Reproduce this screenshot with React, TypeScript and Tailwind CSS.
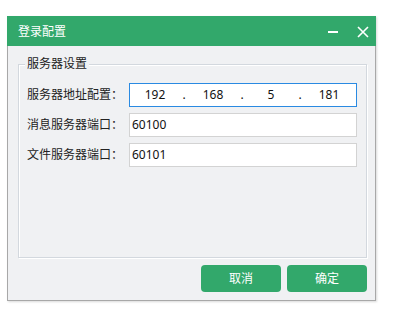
import React from "react";

const font = "font-['Noto_Sans','Noto_Sans_CJK_SC',sans-serif]";

const Field = ({ label, value }: { label: string; value: string }) => (
  <div className="flex h-[24px] items-center">
    <span className="w-[102px] shrink-0 text-[12px] text-[#222]">{label}</span>
    <div className="flex h-[24px] w-[228px] items-center border border-[#d3d3d3] bg-white pl-[2px] text-[12px] text-[#111]">
      {value}
    </div>
  </div>
);

const App = () => {
  const ip = ["192", "168", "5", "181"];

  return (
    <div className={`h-[312px] w-[394px] bg-white pl-[7px] pt-[16px] ${font}`}>
      <div className="flex h-[285px] w-[369px] flex-col shadow-[1px_1px_2px_rgba(0,0,0,0.15)]">
        <div className="flex h-[30px] shrink-0 items-center bg-[#32a86b] pl-[11px] pr-[7px] text-white">
          <span className="pt-[2px] text-[12px]">登录配置</span>
          <div className="ml-auto flex items-center gap-[19px]">
            <div className="mt-[2px] h-[2px] w-[10px] bg-white" />
            <svg width="12" height="12" viewBox="0 0 12 12" className="mt-[2px]">
              <path d="M1 1L11 11M11 1L1 11" stroke="#fff" strokeWidth="1.6" />
            </svg>
          </div>
        </div>

        <div className="flex flex-1 flex-col border-x border-b border-[#a8a8a8] bg-[#f0f1f3] pl-[10px] pr-[8px] pt-[18px] pb-[8px]">
          <div className="relative h-[194px] border border-[#d3d8de] px-[8px] pt-[18px] shadow-[inset_1px_1px_0_#fff,1px_1px_0_#fff]">
            <span className="absolute left-[6px] top-[-9px] bg-[#f0f1f3] px-[2px] text-[12px] leading-[16px] text-[#222]">
              服务器设置
            </span>
            <div className="flex flex-col gap-[6px]">
              <div className="flex h-[24px] items-center">
                <span className="w-[102px] shrink-0 text-[12px] text-[#222]">服务器地址配置：</span>
                <div className="flex h-[24px] w-[228px] items-center border border-[#2a8ae2] bg-white text-[12px] text-[#111]">
                  {ip.map((part, i) => (
                    <React.Fragment key={i}>
                      {i > 0 && <span className="w-[8px] text-center">.</span>}
                      <span className="w-[50px] text-center">{part}</span>
                    </React.Fragment>
                  ))}
                </div>
              </div>
              <Field label="消息服务器端口：" value="60100" />
              <Field label="文件服务器端口：" value="60101" />
            </div>
          </div>

          <div className="mt-[7px] flex justify-end gap-[6px]">
            <button className="h-[27px] w-[80px] rounded-[4px] bg-[#32a86b] text-[12px] text-white">取消</button>
            <button className="h-[27px] w-[80px] rounded-[4px] bg-[#32a86b] text-[12px] text-white">确定</button>
          </div>
        </div>
      </div>
    </div>
  );
};

export default App;
